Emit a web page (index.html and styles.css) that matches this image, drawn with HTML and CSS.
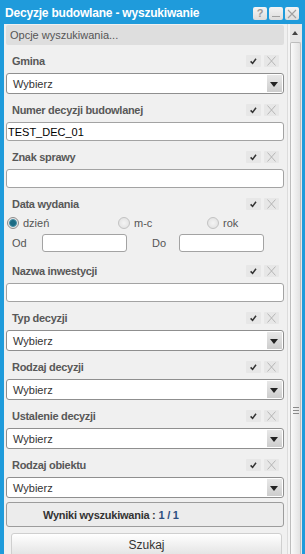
FILE: index.html
```html
<!DOCTYPE html>
<html lang="pl">

<head>
    <meta charset="utf-8">
    <title>Decyzje budowlane - wyszukiwanie</title>
    <link rel="stylesheet" href="styles.css">
</head>

<body>
    <div class="window">
        <div class="titlebar">
            <span class="title">Decyzje budowlane - wyszukiwanie</span>
            <div class="tools">
                <span class="tool">?</span>
                <span class="tool"><span class="dash"></span></span>
                <span class="tool">
                    <svg width="10" height="10" viewBox="0 0 10 10"><path d="M1 1L9 9M9 1L1 9" stroke="#a0a0a0" stroke-width="1.1"/></svg>
                </span>
            </div>
        </div>

        <div class="main">
            <div class="content">
                <div class="section-head">Opcje wyszukiwania...</div>

                <div class="field">
                    <div class="field-head">
                        <label>Gmina</label>
                        <div class="actions">
                            <span class="act"><svg width="15" height="12" viewBox="0 0 15 12"><path d="M4.6 6.4L6.6 8.4L10 3.8" fill="none" stroke="#333" stroke-width="1.5"/></svg></span>
                            <span class="act"><svg width="15" height="12" viewBox="0 0 15 12"><path d="M3.5 1.5L11.5 10.5M11.5 1.5L3.5 10.5" stroke="#b0b0b0" stroke-width="0.9"/></svg></span>
                        </div>
                    </div>
                    <div class="select"><span>Wybierz</span><span class="arrow"></span></div>
                </div>

                <div class="field">
                    <div class="field-head">
                        <label>Numer decyzji budowlanej</label>
                        <div class="actions">
                            <span class="act"><svg width="15" height="12" viewBox="0 0 15 12"><path d="M4.6 6.4L6.6 8.4L10 3.8" fill="none" stroke="#333" stroke-width="1.5"/></svg></span>
                            <span class="act"><svg width="15" height="12" viewBox="0 0 15 12"><path d="M3.5 1.5L11.5 10.5M11.5 1.5L3.5 10.5" stroke="#b0b0b0" stroke-width="0.9"/></svg></span>
                        </div>
                    </div>
                    <div class="input">TEST_DEC_01</div>
                </div>

                <div class="field">
                    <div class="field-head">
                        <label>Znak sprawy</label>
                        <div class="actions">
                            <span class="act"><svg width="15" height="12" viewBox="0 0 15 12"><path d="M4.6 6.4L6.6 8.4L10 3.8" fill="none" stroke="#333" stroke-width="1.5"/></svg></span>
                            <span class="act"><svg width="15" height="12" viewBox="0 0 15 12"><path d="M3.5 1.5L11.5 10.5M11.5 1.5L3.5 10.5" stroke="#b0b0b0" stroke-width="0.9"/></svg></span>
                        </div>
                    </div>
                    <div class="input"></div>
                </div>

                <div class="field date">
                    <div class="field-head">
                        <label>Data wydania</label>
                        <div class="actions">
                            <span class="act"><svg width="15" height="12" viewBox="0 0 15 12"><path d="M4.6 6.4L6.6 8.4L10 3.8" fill="none" stroke="#333" stroke-width="1.5"/></svg></span>
                            <span class="act"><svg width="15" height="12" viewBox="0 0 15 12"><path d="M3.5 1.5L11.5 10.5M11.5 1.5L3.5 10.5" stroke="#b0b0b0" stroke-width="0.9"/></svg></span>
                        </div>
                    </div>
                    <div class="radios">
                        <span class="radio-item r1"><span class="radio on"></span>dzień</span>
                        <span class="radio-item r2"><span class="radio"></span>m-c</span>
                        <span class="radio-item r3"><span class="radio"></span>rok</span>
                    </div>
                    <div class="range">
                        <span class="range-label">Od</span>
                        <div class="input small"></div>
                        <span class="range-label to">Do</span>
                        <div class="input small"></div>
                    </div>
                </div>

                <div class="field">
                    <div class="field-head">
                        <label>Nazwa inwestycji</label>
                        <div class="actions">
                            <span class="act"><svg width="15" height="12" viewBox="0 0 15 12"><path d="M4.6 6.4L6.6 8.4L10 3.8" fill="none" stroke="#333" stroke-width="1.5"/></svg></span>
                            <span class="act"><svg width="15" height="12" viewBox="0 0 15 12"><path d="M3.5 1.5L11.5 10.5M11.5 1.5L3.5 10.5" stroke="#b0b0b0" stroke-width="0.9"/></svg></span>
                        </div>
                    </div>
                    <div class="input"></div>
                </div>

                <div class="field">
                    <div class="field-head">
                        <label>Typ decyzji</label>
                        <div class="actions">
                            <span class="act"><svg width="15" height="12" viewBox="0 0 15 12"><path d="M4.6 6.4L6.6 8.4L10 3.8" fill="none" stroke="#333" stroke-width="1.5"/></svg></span>
                            <span class="act"><svg width="15" height="12" viewBox="0 0 15 12"><path d="M3.5 1.5L11.5 10.5M11.5 1.5L3.5 10.5" stroke="#b0b0b0" stroke-width="0.9"/></svg></span>
                        </div>
                    </div>
                    <div class="select"><span>Wybierz</span><span class="arrow"></span></div>
                </div>

                <div class="field">
                    <div class="field-head">
                        <label>Rodzaj decyzji</label>
                        <div class="actions">
                            <span class="act"><svg width="15" height="12" viewBox="0 0 15 12"><path d="M4.6 6.4L6.6 8.4L10 3.8" fill="none" stroke="#333" stroke-width="1.5"/></svg></span>
                            <span class="act"><svg width="15" height="12" viewBox="0 0 15 12"><path d="M3.5 1.5L11.5 10.5M11.5 1.5L3.5 10.5" stroke="#b0b0b0" stroke-width="0.9"/></svg></span>
                        </div>
                    </div>
                    <div class="select"><span>Wybierz</span><span class="arrow"></span></div>
                </div>

                <div class="field">
                    <div class="field-head">
                        <label>Ustalenie decyzji</label>
                        <div class="actions">
                            <span class="act"><svg width="15" height="12" viewBox="0 0 15 12"><path d="M4.6 6.4L6.6 8.4L10 3.8" fill="none" stroke="#333" stroke-width="1.5"/></svg></span>
                            <span class="act"><svg width="15" height="12" viewBox="0 0 15 12"><path d="M3.5 1.5L11.5 10.5M11.5 1.5L3.5 10.5" stroke="#b0b0b0" stroke-width="0.9"/></svg></span>
                        </div>
                    </div>
                    <div class="select"><span>Wybierz</span><span class="arrow"></span></div>
                </div>

                <div class="field">
                    <div class="field-head">
                        <label>Rodzaj obiektu</label>
                        <div class="actions">
                            <span class="act"><svg width="15" height="12" viewBox="0 0 15 12"><path d="M4.6 6.4L6.6 8.4L10 3.8" fill="none" stroke="#333" stroke-width="1.5"/></svg></span>
                            <span class="act"><svg width="15" height="12" viewBox="0 0 15 12"><path d="M3.5 1.5L11.5 10.5M11.5 1.5L3.5 10.5" stroke="#b0b0b0" stroke-width="0.9"/></svg></span>
                        </div>
                    </div>
                    <div class="select"><span>Wybierz</span><span class="arrow"></span></div>
                </div>

                <div class="results">Wyniki wyszukiwania : <span class="count">1 / 1</span></div>

                <button class="search">Szukaj</button>
            </div>

            <div class="scrollbar">
                <div class="scroll-up"></div>
                <div class="thumb"><span class="grip"></span></div>
            </div>
        </div>
    </div>
</body>

</html>
```

FILE: styles.css
```css
body {
    margin: 0;
    font-family: "Liberation Sans", Arial, sans-serif;
    font-size: 11px;
    color: #333;
    background: #1f9bdb;
}

.window {
    width: 305px;
    height: 554px;
    overflow: hidden;
    background: #1f9bdb;
    display: flex;
    flex-direction: column;
}

.titlebar {
    height: 24px;
    flex: none;
    display: flex;
    justify-content: space-between;
    padding: 0 6px 0 5px;
}

.title {
    color: #fff;
    font-size: 12px;
    font-weight: bold;
    letter-spacing: -0.2px;
    line-height: 14px;
    margin-top: 6px;
}

.tools {
    display: flex;
    gap: 2px;
    margin-top: 7px;
}

.tool {
    width: 14px;
    height: 13px;
    border-radius: 2px;
    background: linear-gradient(#f4f4f4, #dcdcdc);
    color: #9a9a9a;
    font-weight: bold;
    font-size: 11px;
    line-height: 13px;
    display: flex;
    align-items: center;
    justify-content: center;
}

.dash {
    width: 8px;
    height: 1px;
    background: #a0a0a0;
    margin-top: 6px;
}

.main {
    flex: 1;
    display: flex;
    margin-left: 4px;
    margin-right: 3px;
    background: #f0f0f0;
}

.content {
    flex: 1;
    padding: 1px 3px 0 2px;
    display: flex;
    flex-direction: column;
}

.section-head {
    height: 20px;
    line-height: 20px;
    background: #dedede;
    border-radius: 2px;
    padding-left: 4px;
    color: #555;
    margin-bottom: 3px;
}

.field {
    display: flex;
    flex-direction: column;
    margin-bottom: 3px;
}

.field.date {
    margin-bottom: 5px;
}

.field-head {
    height: 25px;
    display: flex;
    align-items: center;
    justify-content: space-between;
    padding-left: 6px;
}

label {
    font-weight: bold;
    color: #585858;
    letter-spacing: -0.3px;
}

.actions {
    display: flex;
    gap: 3px;
    margin-right: 5px;
}

.act {
    width: 15px;
    height: 12px;
    background: #e7e7e7;
    border-radius: 1px;
    display: block;
}

.act svg {
    display: block;
}

.input,
.select {
    height: 17px;
    border: 1px solid #a3a3a3;
    border-radius: 3px;
    background: #fff;
    display: flex;
    align-items: center;
    padding-left: 1px;
    color: #000;
}

.select {
    height: 19px;
    padding-left: 6px;
    justify-content: space-between;
    color: #333;
    border-color: #8f8f8f;
}

.arrow {
    width: 15px;
    height: 17px;
    margin-right: 1px;
    background: linear-gradient(#e8e8e8, #cdcdcd);
    position: relative;
}

.arrow::after {
    content: "";
    position: absolute;
    left: 3px;
    top: 7px;
    border-left: 4px solid transparent;
    border-right: 4px solid transparent;
    border-top: 5px solid #222;
}

.radios {
    display: flex;
    height: 14px;
    align-items: center;
    color: #555;
}

.radio-item {
    display: flex;
    align-items: center;
    gap: 4px;
}

.r1 {
    width: 111px;
    margin-left: 1px;
}

.r2 {
    width: 89px;
}

.radio {
    width: 10px;
    height: 10px;
    border-radius: 50%;
    border: 1px solid #c2c2c2;
    background: radial-gradient(#f4f4f4, #dedede);
}

.radio.on {
    background: radial-gradient(#1b6b84 35%, #4f93a8 50%, #e6e6e6 62%);
    border-color: #8c8c8c;
}

.range {
    display: flex;
    align-items: center;
    margin-top: 3px;
    height: 20px;
}

.range-label {
    color: #555;
    width: 36px;
    padding-left: 6px;
    box-sizing: border-box;
}

.range-label.to {
    width: 52px;
    padding-left: 25px;
}

.input.small {
    width: 83px;
    height: 16px;
    padding: 0;
}

.results {
    margin-top: 1px;
    height: 23px;
    border: 1px solid #9c9c9c;
    border-radius: 3px;
    background: #ececec;
    display: flex;
    align-items: center;
    padding-left: 36px;
    font-weight: bold;
    letter-spacing: -0.25px;
    color: #333;
}

.count {
    color: #2d4f80;
    margin-left: 3px;
}

.search {
    margin: 6px 2px 0 5px;
    height: 24px;
    flex: none;
    border: 1px solid #cfcfcf;
    border-radius: 3px;
    background: linear-gradient(#ffffff, #e2e2e2);
    font-family: "Liberation Sans", Arial, sans-serif;
    font-size: 12px;
    color: #333;
    padding: 0;
}

.scrollbar {
    width: 15px;
    flex: none;
    display: flex;
    flex-direction: column;
    background: linear-gradient(90deg, #dcdcdc 0 1px, #f4f4f4 1px 3px, #e6e6e6 3px);
}

.scroll-up {
    height: 16px;
    margin-top: 2px;
    position: relative;
}

.scroll-up::after {
    content: "";
    position: absolute;
    left: 5px;
    top: 5px;
    border-left: 3px solid transparent;
    border-right: 3px solid transparent;
    border-bottom: 4px solid #444;
}

.thumb {
    flex: 1;
    margin: 0 1px 0 3px;
    border: 1px solid #bdbdbd;
    border-bottom: none;
    border-radius: 2px 2px 0 0;
    background: linear-gradient(90deg, #fafafa, #e2e2e2);
    display: flex;
    justify-content: center;
}

.grip {
    width: 6px;
    height: 7px;
    margin-top: 364px;
    background: repeating-linear-gradient(#8a8a8a 0 1px, transparent 1px 3px);
}
```
